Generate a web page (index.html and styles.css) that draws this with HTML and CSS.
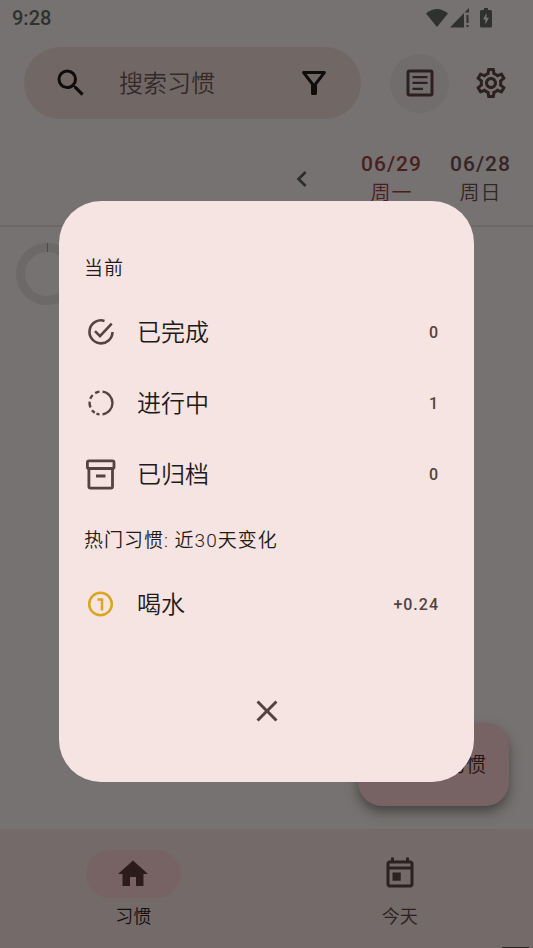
FILE: index.html
```html
<!DOCTYPE html>
<html lang="zh-CN">
<head>
<meta charset="utf-8">
<meta name="viewport" content="width=device-width, initial-scale=1">
<title>习惯</title>
<link rel="stylesheet" href="styles.css">
</head>
<body>
<div class="app">
  <header class="status">
    <time>9:28</time>
    <div class="status-icons">
      <svg width="22" height="18" viewBox="0 0 22 18"><path d="M0 4.500Q11-4.500 22 4.500L11 18Z"/></svg>
      <svg width="20" height="20" viewBox="0 0 20 20"><path d="M0 19.500L14 5V19.500ZM14.500 4.500L19 0V4.500ZM16.500 7H18.500V15H16.500ZM16.500 17H18.500V19H16.500Z"/></svg>
      <svg class="battery" width="12" height="20" viewBox="0 0 12 20"><path fill-rule="evenodd" d="M4 0H8V2H10.500Q12 2 12 3.500V18Q12 19.500 10.500 19.500H1.500Q0 19.500 0 18V3.500Q0 2 1.500 2H4ZM6.500 5L3 11.500H5.300V16.500L9 9.800H6.500Z"/></svg>
    </div>
  </header>

  <div class="toolbar">
    <form class="search" role="search">
      <svg width="36" height="36" viewBox="0 0 24 24"><path d="M15.500 14h-.79l-.28-.27A6.470 6.470 0 0 0 16 9.500 6.500 6.500 0 1 0 9.500 16c1.610 0 3.090-.59 4.230-1.570l.27.28v.79l5 4.990L20.490 19l-4.990-5zm-6 0a4.500 4.500 0 1 1 0-9 4.500 4.500 0 0 1 0 9z"/></svg>
      <input type="search" placeholder="搜索习惯" aria-label="搜索习惯">
      <button type="button" class="icon-button filter" aria-label="筛选">
        <svg width="36" height="36" viewBox="0 0 24 24"><path d="M7 6h10l-5.010 6.300L7 6zm-2.750-.39C6.270 8.200 10 13 10 13v6c0 .55.450 1 1 1h2c.55 0 1-.45 1-1v-6s3.720-4.800 5.740-7.390A.998.998 0 0 0 18.950 4H5.040c-.83 0-1.300.95-.79 1.610z"/></svg>
      </button>
    </form>
    <button type="button" class="icon-button round" aria-label="统计">
      <svg width="36" height="36" viewBox="0 0 24 24"><rect x="4" y="4" width="16" height="16" rx="1" fill="none" stroke="currentColor" stroke-width="2"/><path d="M7 7.300h10v1.500H7zM7 11.200h10v1.500H7zM7 15.100h7v1.500H7z"/></svg>
    </button>
    <button type="button" class="icon-button" aria-label="设置">
      <svg width="36" height="36" viewBox="0 0 24 24"><path d="M19.430 12.980c.04-.32.070-.64.070-.98s-.03-.66-.07-.98l2.110-1.650c.19-.15.240-.42.120-.64l-2-3.460c-.09-.16-.26-.25-.44-.25-.06 0-.12.010-.17.030l-2.490 1c-.52-.4-1.080-.73-1.690-.98l-.38-2.650C14.460 2.180 14.250 2 14 2h-4c-.25 0-.46.180-.49.420l-.38 2.650c-.61.250-1.170.590-1.690.980l-2.490-1c-.06-.02-.12-.03-.18-.03-.17 0-.34.090-.43.250l-2 3.460c-.13.220-.07.490.120.640l2.110 1.650c-.04.320-.07.650-.07.980s.03.660.07.980l-2.110 1.650c-.19.150-.24.420-.12.640l2 3.460c.09.160.26.250.44.250.06 0 .12-.01.17-.03l2.490-1c.52.400 1.080.730 1.690.980l.38 2.650c.03.240.24.420.49.420h4c.25 0 .46-.18.490-.42l.38-2.650c.61-.25 1.170-.59 1.690-.98l2.490 1c.06.020.12.030.18.030.17 0 .34-.09.430-.25l2-3.460c.12-.22.070-.49-.12-.64l-2.110-1.650zm-1.980-1.710c.04.310.05.520.05.730s-.02.430-.05.730l-.14 1.130.89.700 1.080.84-.7 1.210-1.270-.51-1.040-.42-.9.680c-.43.320-.84.560-1.250.730l-1.060.43-.16 1.130-.2 1.350h-1.400l-.19-1.350-.16-1.130-1.060-.43c-.43-.18-.83-.41-1.230-.71l-.91-.7-1.060.43-1.270.51-.7-1.210 1.080-.84.890-.7-.14-1.130c-.03-.31-.05-.54-.05-.74s.02-.43.050-.73l.14-1.130-.89-.7-1.080-.84.700-1.210 1.270.51 1.040.42.900-.68c.43-.32.840-.56 1.250-.73l1.060-.43.160-1.130.2-1.350h1.390l.19 1.350.16 1.130 1.060.43c.43.180.83.410 1.230.71l.91.700 1.060-.43 1.270-.51.700 1.210-1.070.85-.89.700.14 1.130zM12 8c-2.210 0-4 1.790-4 4s1.790 4 4 4 4-1.790 4-4-1.790-4-4-4zm0 6c-1.100 0-2-.9-2-2s.9-2 2-2 2 .9 2 2-.9 2-2 2z"/></svg>
    </button>
  </div>

  <div class="dates">
    <button type="button" class="icon-button" aria-label="更近日期">
      <svg width="32" height="32" viewBox="0 0 24 24"><path d="M15.410 7.410 14 6l-6 6 6 6 1.410-1.410L10.830 12z"/></svg>
    </button>
    <div class="day today"><b>06/29</b><span>周一</span></div>
    <div class="day"><b>06/28</b><span>周日</span></div>
  </div>

  <main class="habits">
    <svg width="62" height="62" viewBox="0 0 62 62"><circle cx="31" cy="31" r="26.500" fill="none" stroke="#6c6968" stroke-width="9"/><path d="M31.500 0V9" stroke="#4b4757"/></svg>
    <button type="button" class="fab"><svg width="36" height="36" viewBox="0 0 24 24"><path d="M19 13h-6v6h-2v-6H5v-2h6V5h2v6h6z"/></svg><span>习惯</span></button>
  </main>

  <nav class="nav">
    <a href="#habits" class="active">
      <span class="pill"><svg width="36" height="36" viewBox="0 0 24 24"><path d="M10 20v-6h4v6h5v-8h3L12 3 2 12h3v8z"/></svg></span>
      习惯
    </a>
    <a href="#today">
      <span class="pill"><svg width="36" height="36" viewBox="0 0 24 24"><path d="M19 3h-1V1h-2v2H8V1H6v2H5c-1.110 0-1.990.9-1.990 2L3 19c0 1.100.89 2 2 2h14c1.100 0 2-.9 2-2V5c0-1.100-.9-2-2-2zm0 16H5V9h14v10zm0-12H5V5h14v2zM7 11h5.500v5.500H7z"/></svg></span>
      今天
    </a>
  </nav>
  <div class="corner-mark"></div>
</div>

<div class="overlay">
  <section class="dialog" role="dialog" aria-modal="true" aria-label="当前">
    <h2>当前</h2>
    <ul>
      <li>
        <svg width="34" height="34" viewBox="0 0 34 34" fill="none" stroke="currentColor" stroke-width="2.600"><path d="M20.500 4.900A11.500 11.500 0 1 0 28.500 16M11 15.200L16 20.200L27.700 7.600"/></svg>
        <span class="name">已完成</span><span class="value">0</span>
      </li>
      <li>
        <svg width="34" height="34" viewBox="0 0 34 34" fill="none" stroke="currentColor" stroke-width="2.400"><path d="M18.500 4.600A11.500 11.500 0 0 1 18.500 27.400"/><path d="M15.500 4.600A11.500 11.500 0 0 0 11.200 6.100M8.700 8A11.500 11.500 0 0 0 6.300 11.800M5.600 14.700A11.500 11.500 0 0 0 6.500 20.500M8 23.200A11.500 11.500 0 0 0 10.800 25.700M12.500 26.600A11.500 11.500 0 0 0 15.500 27.400"/></svg>
        <span class="name">进行中</span><span class="value">1</span>
      </li>
      <li>
        <svg width="34" height="34" viewBox="0 0 34 34" fill="none" stroke="currentColor" stroke-width="2.800"><rect x="3.400" y="2.900" width="26.600" height="7.600" rx="1.500"/><path d="M4.900 10.500V28.500Q4.900 30.100 6.500 30.100H26.900Q28.500 30.100 28.500 28.500V10.500M12 18H21.500"/></svg>
        <span class="name">已归档</span><span class="value">0</span>
      </li>
    </ul>
    <h2>热门习惯: 近30天变化</h2>
    <ul>
      <li class="gold">
        <svg width="34" height="34" viewBox="0 0 34 34" fill="none" stroke="currentColor" stroke-width="2.500"><circle cx="16.500" cy="16" r="11.300"/><path d="M13.500 11.500H18V22.500"/></svg>
        <span class="name">喝水</span><span class="value">+0.24</span>
      </li>
    </ul>
    <button type="button" class="icon-button close" aria-label="关闭">
      <svg width="36" height="36" viewBox="0 0 24 24"><path d="M19 6.410 17.590 5 12 10.590 6.410 5 5 6.410 10.590 12 5 17.590 6.410 19 12 13.410 17.590 19 19 17.590 13.410 12z"/></svg>
    </button>
  </section>
</div>
</body>
</html>
```
FILE: styles.css
```css
* { box-sizing: border-box; }

body {
  margin: 0;
  background: #767271;
  color: #2c2020;
  font-family: Roboto, "Noto Sans CJK SC", sans-serif;
  font-size: 20px;
  font-weight: 350;
}

svg { display: block; flex: none; fill: currentColor; }
svg[fill="none"] { fill: none; }

.app {
  display: flex;
  flex-direction: column;
  position: relative;
  min-height: 100vh;
}

.icon-button {
  display: grid;
  place-items: center;
  padding: 0;
  border: 0;
  background: none;
  color: inherit;
}

.status {
  display: flex;
  align-items: center;
  justify-content: space-between;
  height: 36px;
  padding: 0 41px 0 12px;
  color: #2f312f;
  font-size: 20px;
  font-weight: 500;
}
.status-icons { display: flex; align-items: center; gap: 2px; }
.battery { margin-left: 8px; }

.toolbar {
  display: flex;
  align-items: center;
  padding: 11px 24px 0;
}
.search {
  display: flex;
  align-items: center;
  flex: 1;
  min-width: 0;
  height: 72px;
  margin-right: 29px;
  padding: 0 29px;
  border-radius: 36px;
  background: #716866;
  color: #100c0c;
}
.search input {
  flex: 1;
  min-width: 0;
  padding: 2px 0 0;
  margin-left: 30px;
  border: 0;
  outline: 0;
  background: none;
  font: inherit;
  font-size: 24px;
}
.search input::placeholder { color: #342a2a; opacity: 1; }
.round {
  width: 59px;
  height: 59px;
  margin-right: 24px;
  border-radius: 50%;
  background: #716d6c;
}

.dates {
  display: flex;
  align-items: center;
  justify-content: flex-end;
  height: 108px;
  padding: 13px 8px 0 0;
  border-bottom: 2px solid #6c6867;
  color: #2c2e2d;
}
.dates .icon-button { margin-right: 29px; }
.day {
  display: flex;
  flex-direction: column;
  align-items: center;
  width: 89px;
  line-height: 29px;
  letter-spacing: 1px;
  color: #342626;
}
.day b { font-weight: 500; font-size: 21px; }
.today { color: #4a1f1f; }

.habits {
  display: flex;
  flex-direction: column;
  justify-content: space-between;
  flex: 1;
  padding: 16px 24px 23px 16px;
}
.fab {
  display: flex;
  align-items: center;
  justify-content: flex-end;
  gap: 18px;
  align-self: flex-end;
  width: 151px;
  height: 83px;
  padding: 0 23px 2px;
  border: 0;
  border-radius: 24px;
  background: #776363;
  box-shadow: 0 6px 12px rgb(40 42 38 / 60%);
  color: #2c1215;
  font: inherit;
}

.nav {
  display: flex;
  height: 119px;
  padding-top: 21px;
  background: #746a69;
}
.nav a {
  display: flex;
  flex: 1;
  flex-direction: column;
  align-items: center;
  gap: 4px;
  color: #2c2020;
  font-size: 18px;
  line-height: 29px;
  text-decoration: none;
}
.nav .active { color: #140e0e; }
.pill {
  display: grid;
  place-items: center;
  width: 95px;
  height: 48px;
  border-radius: 24px;
}
.active .pill { background: #776363; color: #2c1b1b; }

.corner-mark {
  position: absolute;
  right: 4px;
  bottom: 0;
  width: 27px;
  height: 1px;
  background: #2a2221;
}

.overlay {
  position: fixed;
  inset: 0;
  display: flex;
  align-items: center;
  padding: 35px 59px 0;
}
.dialog {
  flex: 1;
  padding: 50px 25px 35px;
  border-radius: 42px;
  background: #f5e4e1;
  color: #231919;
}
.dialog h2 {
  margin: 0;
  font-size: 19px;
  font-weight: 350;
  letter-spacing: 1px;
  line-height: 36px;
}
.dialog ul { margin: 0; padding: 10px 10px 0 0; list-style: none; }
.dialog ul + h2 { margin-top: 13px; }
.dialog li {
  display: flex;
  align-items: center;
  height: 71px;
  color: #534341;
}
.name {
  flex: 1;
  margin-left: 19px;
  padding-bottom: 4px;
  color: #231919;
  font-size: 24px;
}
.value { font-size: 16px; font-weight: 500; letter-spacing: 1px; color: #534341; }
.dialog .gold { color: #daa520; }
.close { width: 72px; height: 72px; margin: 35px auto 0; color: #534341; }
```
